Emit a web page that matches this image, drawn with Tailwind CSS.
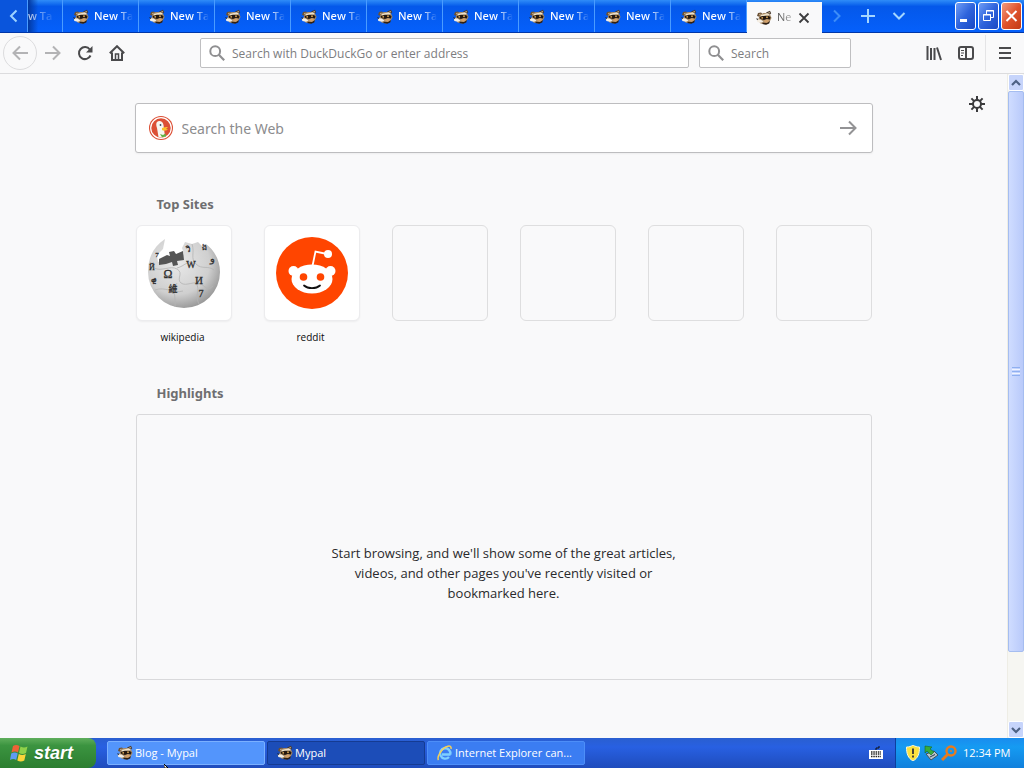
<!DOCTYPE html>
<html lang="en">
<head>
    <meta charset="UTF-8">
    <meta name="viewport" content="width=device-width, initial-scale=1.0">
    <title>New Tab</title>
    <script src="https://cdn.jsdelivr.net/npm/@tailwindcss/browser@4"></script>
</head>
<body class="min-h-screen flex flex-col bg-[#f9f9fa] font-['Open_Sans','Noto_Sans',sans-serif] text-[#0c0c0d]">
    <!-- Shared icons -->
    <svg class="hidden">
        <symbol id="raccoon" viewBox="0 0 16 16">
            <path d="M2 3l3-.5 2 2L4 7 1 6z" fill="#6b5238"/>
            <path d="M3 4l1.800-.3L4 5.500z" fill="#e2cba4"/>
            <path d="M10 2.500L14 .8l1.200 2.400-2 2.300z" fill="#4b3d31"/>
            <path d="M12 2.800l1.700-.8.2 1.500z" fill="#d9c3a0"/>
            <path d="M4 4.500C7 2.500 12 2.500 14.500 5.500L15.500 8l-2 4-4 2.500-5-1L2 10z" fill="#a98b66"/>
            <path d="M4.500 5l7.500-1.800 2 1.800-8.500 2z" fill="#efe2c9"/>
            <path d="M3.500 7.500C6 5.200 12 5 14.500 7l-.5 2.500-3-.8L8 10 4.500 9z" fill="#23170f"/>
            <path d="M.8 9.200l3.700.3L7.500 11.500l-2.500 1.200-3.700-.7z" fill="#f5efe5"/>
            <path d="M8 10.500l3-1 2.500 1.300-2 2-3-.3z" fill="#d2a06a"/>
            <path d="M0 8.500l2 .3-.5 1.500z" fill="#111"/>
            <path d="M7 12.800l4 .2 3-2-.8 2.500-3 1.200-4-.6z" fill="#2f2014"/>
            <circle cx="6.200" cy="7.800" r=".9" fill="#e0ab58"/>
            <circle cx="11" cy="7.200" r=".9" fill="#e0ab58"/>
        </symbol>
        <symbol id="magnifier" viewBox="0 0 16 16">
            <circle cx="6.200" cy="6.200" r="4.900" fill="none" stroke="currentColor" stroke-width="2"/>
            <path d="M9.800 9.800l5.400 5.400" stroke="currentColor" stroke-width="2.200"/>
        </symbol>
    </svg>

    <!-- Tab strip -->
    <header class="flex h-[33px] shrink-0 border-b border-[#0036a8] bg-linear-to-b from-[#2f8cf8] via-[#0458ea] via-20% to-[#0560fb] text-[11px] font-semibold text-white">
        <button aria-label="Scroll tabs left" class="flex w-7 shrink-0 items-center justify-center border-r border-[#4a9cff] bg-[#0a55dc]">
            <svg class="size-3.5" viewBox="0 0 14 14" fill="none" stroke="#9dd2ff" stroke-width="2"><path d="M9.500 1.500L4 7l5.500 5.500"/></svg>
        </button>
        <div role="tablist" class="flex min-w-0">
            <button role="tab" class="flex w-[35px] shrink-0 items-center border-r border-[#4a9cff] bg-linear-to-r from-[#0238a0] to-transparent to-30%"><span class="whitespace-nowrap bg-linear-to-r from-white/80 to-white/10 bg-clip-text text-transparent">w Ta</span></button>
            <button role="tab" class="flex w-[76px] shrink-0 items-center gap-[5px] border-r border-[#4a9cff] pt-px pl-2.5"><svg class="size-4 shrink-0"><use href="#raccoon"/></svg><span class="whitespace-nowrap bg-linear-to-r from-white from-60% to-transparent bg-clip-text text-transparent">New Ta</span></button>
            <button role="tab" class="flex w-[76px] shrink-0 items-center gap-[5px] border-r border-[#4a9cff] pt-px pl-2.5"><svg class="size-4 shrink-0"><use href="#raccoon"/></svg><span class="whitespace-nowrap bg-linear-to-r from-white from-60% to-transparent bg-clip-text text-transparent">New Ta</span></button>
            <button role="tab" class="flex w-[76px] shrink-0 items-center gap-[5px] border-r border-[#4a9cff] pt-px pl-2.5"><svg class="size-4 shrink-0"><use href="#raccoon"/></svg><span class="whitespace-nowrap bg-linear-to-r from-white from-60% to-transparent bg-clip-text text-transparent">New Ta</span></button>
            <button role="tab" class="flex w-[76px] shrink-0 items-center gap-[5px] border-r border-[#4a9cff] pt-px pl-2.5"><svg class="size-4 shrink-0"><use href="#raccoon"/></svg><span class="whitespace-nowrap bg-linear-to-r from-white from-60% to-transparent bg-clip-text text-transparent">New Ta</span></button>
            <button role="tab" class="flex w-[76px] shrink-0 items-center gap-[5px] border-r border-[#4a9cff] pt-px pl-2.5"><svg class="size-4 shrink-0"><use href="#raccoon"/></svg><span class="whitespace-nowrap bg-linear-to-r from-white from-60% to-transparent bg-clip-text text-transparent">New Ta</span></button>
            <button role="tab" class="flex w-[76px] shrink-0 items-center gap-[5px] border-r border-[#4a9cff] pt-px pl-2.5"><svg class="size-4 shrink-0"><use href="#raccoon"/></svg><span class="whitespace-nowrap bg-linear-to-r from-white from-60% to-transparent bg-clip-text text-transparent">New Ta</span></button>
            <button role="tab" class="flex w-[76px] shrink-0 items-center gap-[5px] border-r border-[#4a9cff] pt-px pl-2.5"><svg class="size-4 shrink-0"><use href="#raccoon"/></svg><span class="whitespace-nowrap bg-linear-to-r from-white from-60% to-transparent bg-clip-text text-transparent">New Ta</span></button>
            <button role="tab" class="flex w-[76px] shrink-0 items-center gap-[5px] border-r border-[#4a9cff] pt-px pl-2.5"><svg class="size-4 shrink-0"><use href="#raccoon"/></svg><span class="whitespace-nowrap bg-linear-to-r from-white from-60% to-transparent bg-clip-text text-transparent">New Ta</span></button>
            <button role="tab" class="flex w-[76px] shrink-0 items-center gap-[5px] border-r border-[#4a9cff] pt-px pl-2.5"><svg class="size-4 shrink-0"><use href="#raccoon"/></svg><span class="whitespace-nowrap bg-linear-to-r from-white from-60% to-transparent bg-clip-text text-transparent">New Ta</span></button>
            <!-- Active tab -->
            <div class="mt-0.5 -mb-px flex w-[75px] shrink-0 items-center justify-between bg-[#f9f9fa] pr-3 pl-[9px]">
                <button role="tab" aria-selected="true" class="flex items-center gap-[5px] font-normal"><svg class="size-4 shrink-0"><use href="#raccoon"/></svg><span class="whitespace-nowrap bg-linear-to-r from-[#444] to-[#aaa] bg-clip-text text-transparent">Ne</span></button>
                <button aria-label="Close tab"><svg class="size-3" viewBox="0 0 12 12" stroke="#3c3c3e" stroke-width="1.800"><path d="M1.500 1.500l9 9M10.500 1.500l-9 9"/></svg></button>
            </div>
        </div>
        <div class="flex shrink-0 items-center gap-[15px] pl-[7px]">
            <button aria-label="Scroll tabs right"><svg class="size-4" viewBox="0 0 16 16" fill="none" stroke="#3d8df8" stroke-width="2"><path d="M5 2.500L10.500 8 5 13.500"/></svg></button>
            <button aria-label="New tab"><svg class="size-4" viewBox="0 0 16 16" stroke="#a4d6ff" stroke-width="2"><path d="M8 1v14M1 8h14"/></svg></button>
            <button aria-label="List all tabs"><svg class="size-4" viewBox="0 0 16 16" fill="none" stroke="#a4d6ff" stroke-width="2"><path d="M2.500 5L8 10.500 13.500 5"/></svg></button>
        </div>
        <!-- Window controls -->
        <div class="ml-auto flex shrink-0 gap-0.5 pt-0.5 pr-0.5">
            <button aria-label="Minimize" class="h-7 w-[21px] rounded-[3px] border border-white bg-linear-to-br from-[#6f9cf5] via-[#2e63dc] to-[#1a48c4]"><svg viewBox="0 0 19 26"><path d="M4 17.500h7" stroke="#fff" stroke-width="3"/></svg></button>
            <button aria-label="Restore" class="h-7 w-[21px] rounded-[3px] border border-white bg-linear-to-br from-[#6f9cf5] via-[#2e63dc] to-[#1a48c4]"><svg viewBox="0 0 19 26" fill="none" stroke="#fff"><path d="M7.500 11V7.500h7v7H12M7 8h8M4.500 11.500h7v6h-7zM4 12h8"/></svg></button>
            <button aria-label="Close" class="h-7 w-[21px] rounded-[3px] border border-white bg-linear-to-br from-[#f09a7c] via-[#e0532c] to-[#c23a14]"><svg viewBox="0 0 19 26" stroke="#fff" stroke-width="2"><path d="M4.500 8l10 10M14.500 8l-10 10"/></svg></button>
        </div>
    </header>

    <!-- Navigation toolbar -->
    <nav class="flex h-[41px] shrink-0 items-center border-b border-[#dcdcde] bg-[#f9f9fa] pl-[3px] text-[#4a4a4c]">
        <button aria-label="Back" class="flex size-[34px] items-center justify-center rounded-full border border-[#dcdcde] text-[#b3b3b5]">
            <svg class="size-4" viewBox="0 0 16 16" fill="none" stroke="currentColor" stroke-width="2"><path d="M16 8H1.500M8 1.500L1.500 8 8 14.500"/></svg>
        </button>
        <div class="ml-2 flex gap-4">
            <button aria-label="Forward" class="text-[#b3b3b5]"><svg class="size-4" viewBox="0 0 16 16" fill="none" stroke="currentColor" stroke-width="2"><path d="M0 8h14.500M8 1.500L14.500 8 8 14.500"/></svg></button>
            <button aria-label="Reload"><svg class="size-4" viewBox="0 0 16 16" fill="none" stroke="currentColor" stroke-width="2"><path d="M12.800 4.500A6 6 0 1 0 13.500 10.500"/><path d="M15.500 1v6.500H9z" fill="currentColor" stroke="none"/></svg></button>
            <button aria-label="Home"><svg class="size-4" viewBox="0 0 16 16" fill="none" stroke="currentColor" stroke-width="2"><path d="M.8 8.200L8 1.200l7.200 7M3 7.500V15h10V7.500"/><path d="M6.500 15V9h3v6" stroke-width="1.500"/></svg></button>
        </div>
        <label class="ml-[75px] flex h-[30px] min-w-0 flex-1 items-center gap-[7px] rounded-xs border border-[#bfbfc1] bg-white pl-2 text-[#8f8f91]">
            <svg class="size-4 shrink-0"><use href="#magnifier"/></svg>
            <input type="text" aria-label="Address" placeholder="Search with DuckDuckGo or enter address" class="min-w-0 flex-1 pt-0.5 text-xs outline-none placeholder:text-[#7d7d7f]">
        </label>
        <label class="ml-2.5 flex h-[30px] w-[152px] items-center gap-[7px] rounded-xs border border-[#bfbfc1] bg-white pl-2 text-[#8f8f91]">
            <svg class="size-4 shrink-0"><use href="#magnifier"/></svg>
            <input type="text" aria-label="Search" placeholder="Search" class="min-w-0 flex-1 pt-0.5 text-xs outline-none placeholder:text-[#7d7d7f]">
        </label>
        <div class="ml-[75px] flex gap-4">
            <button aria-label="Library"><svg class="size-4" viewBox="0 0 16 16" fill="none" stroke="currentColor" stroke-width="2"><path d="M1.500 1v14M5 3v12M8.500 3v12M11 2.500l4 12.500"/></svg></button>
            <button aria-label="Sidebars"><svg class="size-4" viewBox="0 0 16 16" fill="none" stroke="currentColor" stroke-width="2"><rect x="1" y="2" width="14" height="12" rx="2"/><path d="M8 2v12"/><path d="M3 5.500h3M3 8h3M3 10.500h2" stroke-width="1"/></svg></button>
        </div>
        <div class="ml-[11px] flex h-9 items-center border-l border-[#e4e4e6] px-[11px]">
            <button aria-label="Menu"><svg class="size-4" viewBox="0 0 16 16" stroke="currentColor" stroke-width="2"><path d="M2 3h12M2 8h12M2 13h12"/></svg></button>
        </div>
    </nav>

    <div class="flex flex-1">
        <!-- New tab page -->
        <main class="relative flex-1 px-4 pt-[29px]">
            <button aria-label="Customize page" class="absolute top-[22px] right-[22px]">
                <svg class="size-4" viewBox="0 0 16 16" fill="none" stroke="#3a3a3c"><circle cx="8" cy="8" r="4" stroke-width="2"/><path d="M8 0v4M8 12v4M0 8h4M12 8h4M2.400 2.400l2.700 2.700M10.900 10.900l2.700 2.700M13.600 2.400l-2.700 2.700M5.100 10.900l-2.700 2.700" stroke-width="2"/></svg>
            </button>
            <div class="mx-auto max-w-[736px]">
                <form class="-mx-px flex h-[50px] items-center rounded-[3px] border border-[#bdbdbf] bg-white px-[13px] shadow-xs">
                    <svg class="size-6 shrink-0" viewBox="0 0 24 24">
                        <circle cx="12" cy="12" r="12" fill="#dc4f35"/>
                        <circle cx="12" cy="12" r="10.300" fill="#dc4f35" stroke="#fff" stroke-width="1.200"/>
                        <path d="M8 6c2-2 6-1 6.500 3l.5 4 1 7.500c-2 1.200-5 1.200-6.500.5L8 12C7 9.500 7 7 8 6z" fill="#f6f5ef"/>
                        <circle cx="11.500" cy="9" r=".9" fill="#3d4f63"/>
                        <path d="M13 12c2-1 4-1 6-1l-2 2 2 .5c-2 1.500-5 1.500-6 .5z" fill="#fbc02d"/>
                        <path d="M11 18l3 1 2.500-1.500.5 3-4 .8z" fill="#63b345"/>
                    </svg>
                    <input type="text" aria-label="Search the Web" placeholder="Search the Web" class="ml-[9px] min-w-0 flex-1 pt-0.5 font-['Noto_Sans','Open_Sans',sans-serif] text-sm outline-none placeholder:text-[#8c8c8e]">
                    <button aria-label="Submit search" class="mr-0.5"><svg class="size-[18px]" viewBox="0 0 18 18" fill="none" stroke="#939395" stroke-width="2"><path d="M1 9h15M10 2.500L16.500 9 10 15.500"/></svg></button>
                </form>

                <section class="mt-10">
                    <h2 class="pl-[21px] font-['Noto_Sans','Open_Sans',sans-serif] text-[13px] leading-[22px] font-bold text-[#6e6e70]">Top Sites</h2>
                    <ul class="mt-2.5 grid grid-cols-6 gap-x-8 text-center text-[10px] leading-4">
                        <li>
                            <a href="#">
                                <span class="flex h-24 items-center justify-center rounded-md border border-[#ececee] bg-white shadow-xs">
                                    <svg class="size-[76px]" viewBox="0 0 76 76">
                                        <defs><radialGradient id="globe" cx=".4" cy=".35" r=".7"><stop offset="0" stop-color="#e9e9e9"/><stop offset=".65" stop-color="#cfcfcf"/><stop offset="1" stop-color="#929292"/></radialGradient></defs>
                                        <path d="M19 4C8 11 2 22 2 37a36 36 0 0 0 72 0c0-12-6-22-14-28l-4 2-4-4-6 2-7-2-3 6 2 6-6 6-14-1-6 3-1-7 6-6z" fill="url(#globe)"/>
                                        <path d="M13 24l8-4 3 1-1-4 5-1 2 3 7-3 1 9-7 1 1 4-5 1-1-4-6 2-7 1z" fill="#555"/>
                                        <path d="M8 33c8 4 16-3 23 1s-1 10 4 14 14-3 20 1 7 7 12 2M29 72c1-12-3-16 2-24M53 69c-5-9 2-13-3-21M46 9c3 9-2 14 4 20s12 1 18 6M31 33c8-2 10-8 18-5M9 55c10-4 18 4 28 1" fill="none" stroke="#b4b4b4" stroke-width=".8"/>
                                        <g font-family="Liberation Serif, serif" fill="#2f2f2f" stroke="#2f2f2f" stroke-width=".3" text-anchor="middle">
                                            <text x="22" y="43" font-size="12">Ω</text>
                                            <text x="45" y="33" font-size="10">W</text>
                                            <text x="53" y="49" font-size="11">И</text>
                                            <text x="27" y="57" font-size="9" font-family="Noto Sans CJK TC, sans-serif">維</text>
                                            <text x="55" y="62" font-size="10">7</text>
                                            <text x="66" y="27" font-size="10">و</text>
                                            <text x="58" y="15" font-size="8">ង</text>
                                            <text x="6" y="35" font-size="8">Й</text>
                                            <text x="8" y="49" font-size="8">ዊ</text>
                                            <text x="42" y="17" font-size="8">วิ</text>
                                            <text x="11" y="22" font-size="7">7</text>
                                        </g>
                                    </svg>
                                </span>
                                <span class="mt-2 block pr-0.5">wikipedia</span>
                            </a>
                        </li>
                        <li>
                            <a href="#">
                                <span class="flex h-24 items-center justify-center rounded-md border border-[#ececee] bg-white shadow-xs">
                                    <svg class="size-[72px]" viewBox="0 0 72 72">
                                        <circle cx="36" cy="36" r="36" fill="#ff4500"/>
                                        <path d="M36.500 29l3-14.500L51 17" fill="none" stroke="#fff" stroke-width="1.800"/>
                                        <circle cx="52" cy="17" r="4" fill="#fff"/>
                                        <circle cx="17.500" cy="34" r="5" fill="#fff"/>
                                        <circle cx="54.500" cy="34" r="5" fill="#fff"/>
                                        <ellipse cx="36" cy="42" rx="20.500" ry="14.500" fill="#fff"/>
                                        <circle cx="27.500" cy="40" r="3.800" fill="#ff4500"/>
                                        <circle cx="44.500" cy="40" r="3.800" fill="#ff4500"/>
                                        <path d="M28 48.500c4 3.500 12 3.500 16 0" fill="none" stroke="#111" stroke-width="1.800" stroke-linecap="round"/>
                                    </svg>
                                </span>
                                <span class="mt-2 block pr-0.5">reddit</span>
                            </a>
                        </li>
                        <li class="h-24 rounded-md border border-[#dededf]"></li>
                        <li class="h-24 rounded-md border border-[#dededf]"></li>
                        <li class="h-24 rounded-md border border-[#dededf]"></li>
                        <li class="h-24 rounded-md border border-[#dededf]"></li>
                    </ul>
                </section>

                <section class="mt-[37px]">
                    <h2 class="pl-[21px] font-['Noto_Sans','Open_Sans',sans-serif] text-[13px] leading-[22px] font-bold text-[#6e6e70]">Highlights</h2>
                    <div class="mt-2.5 flex h-[266px] items-center justify-center rounded-[3px] border border-[#d9d9db] pt-[52px]">
                        <p class="max-w-[350px] text-center text-[13px] leading-5 text-[#2a2a2c]">Start browsing, and we'll show some of the great articles, videos, and other pages you've recently visited or bookmarked here.</p>
                    </div>
                </section>
            </div>
        </main>

        <!-- Scrollbar -->
        <div class="flex w-[17px] shrink-0 flex-col border-l border-[#eeede5] bg-[#f6f6f2]">
            <button aria-label="Scroll up" class="flex h-[17px] items-center justify-center rounded-xs border border-white bg-[#c6d4fb]"><svg class="size-2.5" viewBox="0 0 10 10" fill="none" stroke="#4d6185" stroke-width="2.200"><path d="M1 7l4-4 4 4"/></svg></button>
            <div class="flex-1">
                <div class="flex h-[89%] flex-col items-center justify-center gap-px rounded-xs border border-[#a5bdf0] bg-linear-to-r from-[#cfdcff] to-[#b9cafa]">
                    <span class="h-px w-2 bg-[#8fb0f0]"></span><span class="h-px w-2 bg-[#eef4ff]"></span><span class="h-px w-2 bg-[#8fb0f0]"></span><span class="h-px w-2 bg-[#eef4ff]"></span><span class="h-px w-2 bg-[#8fb0f0]"></span>
                </div>
            </div>
            <button aria-label="Scroll down" class="flex h-[17px] items-center justify-center rounded-xs border border-white bg-[#c6d4fb]"><svg class="size-2.5" viewBox="0 0 10 10" fill="none" stroke="#4d6185" stroke-width="2.200"><path d="M1 3l4 4 4-4"/></svg></button>
        </div>
    </div>

    <!-- Taskbar -->
    <footer class="relative flex h-[30px] shrink-0 bg-linear-to-b from-[#2a5fd0] via-[#2860e2] via-30% to-[#1f4cbc] text-[11px] text-white">
        <button class="flex w-24 shrink-0 items-center gap-1 rounded-r-lg bg-linear-to-b from-[#5fae5c] via-[#3b9440] via-25% to-[#2c7e30] pl-2.5 font-['Liberation_Sans',Arial,sans-serif] text-lg leading-none font-bold italic text-shadow-xs">
            <svg class="size-5 shrink-0" viewBox="0 0 20 20">
                <path d="M3 3c2-1.300 4-1.300 6.500 0L8 9.500C6 8.300 4 8.300 1.500 9.500z" fill="#ee6237"/>
                <path d="M10.500 3.500c2.500 1.300 4.500 1.300 7 0L16 10c-2.500 1.300-4.500 1.300-7 0z" fill="#8fd14a"/>
                <path d="M1.200 10.500c2.500-1.200 4.500-1.200 6.500 0L6.200 17c-2-1.200-4-1.200-6.200 0z" fill="#5f9bf2"/>
                <path d="M8.800 11c2.500 1.300 4.500 1.300 7 0l-1.500 6.500c-2.500 1.300-4.500 1.300-7 0z" fill="#fbd43a"/>
            </svg>
            <span>start</span>
        </button>
        <div class="flex min-w-0 flex-1 items-center gap-0.5 pl-[11px]">
            <button class="flex h-6 w-[158px] items-center gap-0.5 rounded-xs border border-[#7ab0ff] bg-[#5395fc] pl-[9px]"><svg class="size-4 shrink-0"><use href="#raccoon"/></svg><span class="truncate">Blog - Mypal</span></button>
            <button class="flex h-6 w-[158px] items-center gap-0.5 rounded-xs border border-[#153b92] bg-[#1c4db8] pl-[9px]"><svg class="size-4 shrink-0"><use href="#raccoon"/></svg><span class="truncate">Mypal</span></button>
            <button class="flex h-6 w-[158px] items-center gap-0.5 rounded-xs border border-[#4d8ef8] bg-[#3b7df2] pl-[9px]">
                <svg class="size-4 shrink-0" viewBox="0 0 16 16" fill="none"><path d="M13.500 9.500H5M13.300 9.500A5.200 5.200 0 1 0 12 12" stroke="#7fd0ff" stroke-width="2.400"/><path d="M1.500 15C-.5 12 5 3 10 1.500c3-1 4.500 0 4 2.500" stroke="#f3cf5a" stroke-width="1.500"/></svg>
                <span class="whitespace-nowrap">Internet Explorer can...</span>
            </button>
            <button aria-label="Language bar" class="mr-3 ml-auto">
                <svg class="size-[14px]" viewBox="0 0 14 14"><path d="M7 4V2h3V0" fill="none" stroke="#111"/><path d="M0 4h14v9H0z" fill="#fff"/><path d="M2 6h10M2 8h10M2 10.500h10" stroke="#222" stroke-width="1.300" stroke-dasharray="1.500 .8"/></svg>
            </button>
        </div>
        <!-- System tray -->
        <div class="flex w-[129px] shrink-0 items-center gap-0.5 border-l border-[#0d3f9e] bg-linear-to-b from-[#1a8cee] via-[#159bf2] via-30% to-[#1180dc] pl-[9px]">
            <svg class="size-4" viewBox="0 0 16 16"><path d="M8 0c2 1.500 4 2 6.500 2 0 7-1.500 11-6.500 14C3 13 1.500 9 1.500 2 4 2 6 1.500 8 0z" fill="#fbe13e" stroke="#f9f6d8"/><path d="M8 3.500v5.500M8 10.500v2" stroke="#333" stroke-width="1.800"/></svg>
            <svg class="size-4" viewBox="0 0 16 16"><path d="M3 9l8-3 4 4-7 5z" fill="#b9c4cb" stroke="#3e525e"/><path d="M7 12l5-2.500" stroke="#2b3c48"/><path d="M2 1l7 1-2 2 4 3-3 3-4-4-2 2z" fill="#37ac3c" stroke="#1c6a24" stroke-width=".6"/></svg>
            <svg class="size-4" viewBox="0 0 16 16" fill="none" stroke="#e87b1e"><circle cx="10" cy="6" r="4.500" stroke-width="2.400"/><path d="M6.500 9.500L1 15" stroke-width="3"/><circle cx="10" cy="6" r="1" fill="#e87b1e" stroke="none"/></svg>
            <time class="ml-1 whitespace-nowrap">12:34 PM</time>
        </div>
        <!-- Mouse pointer -->
        <svg class="absolute bottom-0 left-[164px] h-1 w-1" viewBox="0 0 4 4"><path d="M0 0l4 4H0z" fill="#fff" stroke="#000"/></svg>
    </footer>
</body>
</html>
